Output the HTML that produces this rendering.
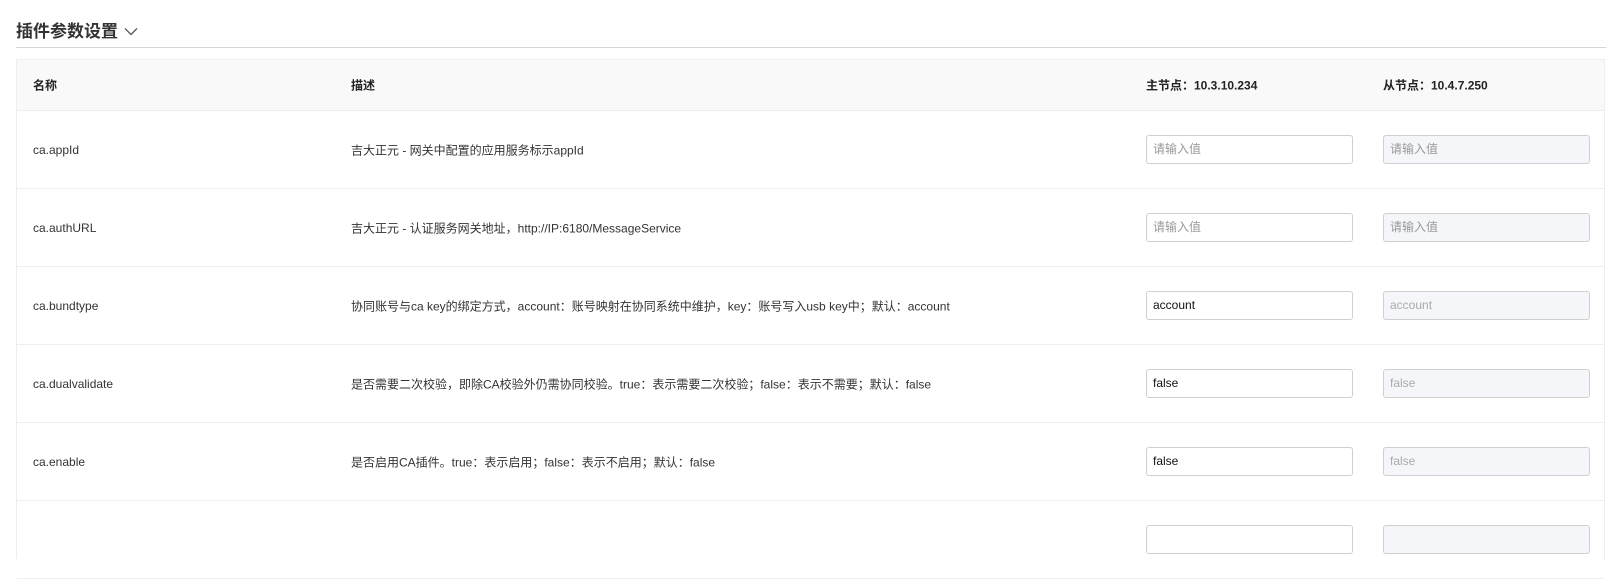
<!DOCTYPE html>
<html><head><meta charset="utf-8"><style>
body{margin:0;background:#fff;font-family:"Liberation Sans","Noto Sans CJK SC",sans-serif;color:#333;width:1616px;height:534px;overflow:hidden;position:relative}
.title{position:absolute;left:16px;top:17px;font-size:17px;color:#333;font-weight:600}
.title svg{vertical-align:middle;margin-left:6px;margin-top:-3px}
.hr{position:absolute;left:16px;top:47px;width:1590px;height:1px;background:#d4d4d9}
.tbl{position:absolute;left:16px;top:59px;width:1587px;height:500px;border-left:1px solid #eee;border-right:1px solid #eee}
.head{height:50px;background:#f9f9f9;border-top:1px solid #eee;border-bottom:1px solid #eee;position:relative;font-size:12px;font-weight:bold;color:#222}
.row{height:77px;border-bottom:1px solid #eee;position:relative;font-size:12px}
.c{position:absolute;top:50%;transform:translateY(-50%);white-space:nowrap}
.n{left:16px}.d{left:334px}.m{left:1129px}.s{left:1366px}
.in{position:absolute;top:24px;width:205px;height:27px;border:1px solid #d0d0d0;border-radius:3px;box-sizing:content-box;font-size:12px;line-height:27px}
.in span{position:absolute;left:6px}
.in.a{left:1129px;background:#fff}.in.b{left:1366px;width:205px;background:#f5f6f9}
.ph{color:#999}.v{color:#111}.dv{color:#aaa}
</style></head><body>
<div class="title">插件参数设置<svg width="14" height="9" viewBox="0 0 14 9"><path d="M1 1.5 L7 7.5 L13 1.5" fill="none" stroke="#555" stroke-width="1.3"/></svg></div>
<div class="hr"></div>
<div class="tbl">
<div class="head"><span class="c n">名称</span><span class="c d">描述</span><span class="c m">主节点：10.3.10.234</span><span class="c s">从节点：10.4.7.250</span></div>
<div class="row"><span class="c n">ca.appId</span><span class="c d">吉大正元 - 网关中配置的应用服务标示appId</span><div class="in a"><span class="ph">请输入值</span></div><div class="in b"><span class="ph">请输入值</span></div></div>
<div class="row"><span class="c n">ca.authURL</span><span class="c d">吉大正元 - 认证服务网关地址，http://IP:6180/MessageService</span><div class="in a"><span class="ph">请输入值</span></div><div class="in b"><span class="ph">请输入值</span></div></div>
<div class="row"><span class="c n">ca.bundtype</span><span class="c d">协同账号与ca key的绑定方式，account：账号映射在协同系统中维护，key：账号写入usb key中；默认：account</span><div class="in a"><span class="v">account</span></div><div class="in b"><span class="dv">account</span></div></div>
<div class="row"><span class="c n">ca.dualvalidate</span><span class="c d">是否需要二次校验，即除CA校验外仍需协同校验。true：表示需要二次校验；false：表示不需要；默认：false</span><div class="in a"><span class="v">false</span></div><div class="in b"><span class="dv">false</span></div></div>
<div class="row"><span class="c n">ca.enable</span><span class="c d">是否启用CA插件。true：表示启用；false：表示不启用；默认：false</span><div class="in a"><span class="v">false</span></div><div class="in b"><span class="dv">false</span></div></div>
<div class="row"><div class="in a"></div><div class="in b"></div></div>
</div>
</body></html>
